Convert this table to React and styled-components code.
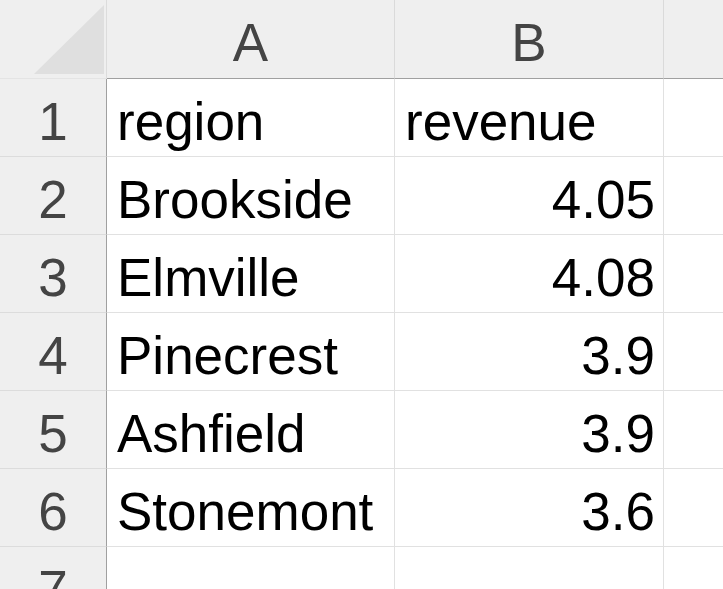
import React from 'react';
import styled, { createGlobalStyle } from 'styled-components';

const GlobalStyle = createGlobalStyle`
  html, body {
    margin: 0;
    padding: 0;
    background: #ffffff;
    overflow: hidden;
  }
  * {
    box-sizing: border-box;
  }
`;

const rows = [
  ['region', 'revenue'],
  ['Brookside', '4.05'],
  ['Elmville', '4.08'],
  ['Pinecrest', '3.9'],
  ['Ashfield', '3.9'],
  ['Stonemont', '3.6'],
  ['', ''],
];

// Сетка листа
const Sheet = styled.div`
  display: grid;
  grid-template-columns: 107px 288px 269px 120px;
  grid-auto-rows: 78px;
  grid-template-rows: 79px;
  width: 784px;
  font-family: 'Liberation Sans', Arial, sans-serif;
  font-size: 53px;
`;

const Corner = styled.div`
  background: #efefef;
  border-right: 1px solid #dcdcdc;
  border-bottom: 1px solid #e4e4e4;
  display: flex;
  align-items: flex-end;
  justify-content: flex-end;
  padding: 0 2px 4px 0;
`;

const Triangle = styled.div`
  width: 70px;
  height: 69px;
  background: #dfdfdf;
  clip-path: polygon(100% 0, 100% 100%, 0 100%);
`;

const ColHeader = styled.div`
  background: #efefef;
  color: #444444;
  border-right: 1px solid #dadada;
  border-bottom: 1px solid #a0a0a0;
  display: flex;
  align-items: flex-end;
  justify-content: center;
  padding-bottom: 9px;
  line-height: 1;
`;

const RowHeader = styled.div`
  background: #efefef;
  color: #444444;
  border-right: 1px solid #a0a0a0;
  border-bottom: 1px solid #dcdcdc;
  display: flex;
  align-items: flex-end;
  justify-content: center;
  padding-bottom: 8px;
  line-height: 1;
`;

const Cell = styled.div`
  background: #ffffff;
  color: #000000;
  border-right: 1px solid #e1e1e1;
  border-bottom: 1px solid #e1e1e1;
  display: flex;
  align-items: flex-end;
  justify-content: ${({ $right }) => ($right ? 'flex-end' : 'flex-start')};
  padding: 0 8px 8px 10px;
  line-height: 1;
  white-space: nowrap;
`;

const App = () => {
  return (
    <>
      <GlobalStyle />
      <Sheet>
        <Corner>
          <Triangle />
        </Corner>
        <ColHeader>A</ColHeader>
        <ColHeader>B</ColHeader>
        <ColHeader />
        {rows.map((row, index) => (
          <React.Fragment key={index}>
            <RowHeader>{index + 1}</RowHeader>
            <Cell>{row[0]}</Cell>
            <Cell $right={index > 0}>{row[1]}</Cell>
            <Cell />
          </React.Fragment>
        ))}
      </Sheet>
    </>
  );
};

export default App;
